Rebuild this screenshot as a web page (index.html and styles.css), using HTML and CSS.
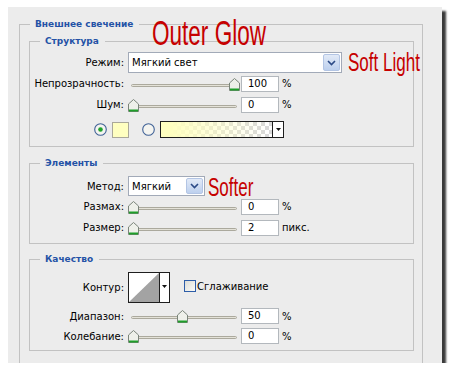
FILE: index.html
```html
<!DOCTYPE html>
<html>
<head>
  <meta charset="utf-8">
  <title>Внешнее свечение</title>
  <link rel="stylesheet" href="styles.css">
</head>
<body>
  <div class="panel">
    <div class="group outer">
      <div class="group-title outer-title">Внешнее свечение</div>

      <!-- Структура -->
      <div class="group inner structure">
        <div class="group-title">Структура</div>
        <div class="row row-select">
          <span class="label">Режим:</span>
          <div class="select select-wide">
            <span class="select-text">Мягкий свет</span>
            <span class="select-btn"><svg width="9" height="6" viewBox="0 0 9 6"><path d="M1 1 L4.5 4.5 L8 1" fill="none" stroke="#2b4a86" stroke-width="1.6"/></svg></span>
          </div>
          <span class="note">Soft Light</span>
        </div>
        <div class="row">
          <span class="label">Непрозрачность:</span>
          <div class="slider">
            <div class="track"></div>
            <svg class="thumb" style="left:101px" width="11" height="13" viewBox="0 0 11 13"><path d="M5.5 .5 L10.5 5 V12.5 H.5 V5 Z" fill="#eef0ea" stroke="#7a847a"/><path d="M1 11.5 H10" stroke="#1f9e2a" stroke-width="2"/></svg>
          </div>
          <div class="num">100</div><span class="unit">%</span>
        </div>
        <div class="row">
          <span class="label">Шум:</span>
          <div class="slider">
            <div class="track"></div>
            <svg class="thumb" style="left:0px" width="11" height="13" viewBox="0 0 11 13"><path d="M5.5 .5 L10.5 5 V12.5 H.5 V5 Z" fill="#eef0ea" stroke="#7a847a"/><path d="M1 11.5 H10" stroke="#1f9e2a" stroke-width="2"/></svg>
          </div>
          <div class="num">0</div><span class="unit">%</span>
        </div>
        <div class="color-row">
          <svg class="radio" width="13" height="13" viewBox="0 0 13 13"><circle cx="6.5" cy="6.5" r="5.8" fill="#f4f4f0" stroke="#3f6196" stroke-width="1.1"/><circle cx="6.5" cy="6.5" r="2.3" fill="#1fa32b"/></svg>
          <span class="swatch"></span>
          <svg class="radio radio-2" width="13" height="13" viewBox="0 0 13 13"><circle cx="6.5" cy="6.5" r="5.8" fill="#f4f4f0" stroke="#3f6196" stroke-width="1.1"/></svg>
          <div class="gradient">
            <span class="gradient-fill"></span>
            <span class="gradient-btn"><svg width="5" height="3" viewBox="0 0 5 3"><path d="M0 0 H5 L2.5 3 Z" fill="#111"/></svg></span>
          </div>
        </div>
      </div>

      <!-- Элементы -->
      <div class="group inner elements">
        <div class="group-title">Элементы</div>
        <div class="row row-select-small">
          <span class="label">Метод:</span>
          <div class="select select-small">
            <span class="select-text">Мягкий</span>
            <span class="select-btn"><svg width="9" height="6" viewBox="0 0 9 6"><path d="M1 1 L4.5 4.5 L8 1" fill="none" stroke="#2b4a86" stroke-width="1.6"/></svg></span>
          </div>
          <span class="note note-short">Softer</span>
        </div>
        <div class="row">
          <span class="label">Размах:</span>
          <div class="slider">
            <div class="track"></div>
            <svg class="thumb" style="left:0px" width="11" height="13" viewBox="0 0 11 13"><path d="M5.5 .5 L10.5 5 V12.5 H.5 V5 Z" fill="#eef0ea" stroke="#7a847a"/><path d="M1 11.5 H10" stroke="#1f9e2a" stroke-width="2"/></svg>
          </div>
          <div class="num">0</div><span class="unit">%</span>
        </div>
        <div class="row">
          <span class="label">Размер:</span>
          <div class="slider">
            <div class="track"></div>
            <svg class="thumb" style="left:0px" width="11" height="13" viewBox="0 0 11 13"><path d="M5.5 .5 L10.5 5 V12.5 H.5 V5 Z" fill="#eef0ea" stroke="#7a847a"/><path d="M1 11.5 H10" stroke="#1f9e2a" stroke-width="2"/></svg>
          </div>
          <div class="num">2</div><span class="unit">пикс.</span>
        </div>
      </div>

      <!-- Качество -->
      <div class="group inner quality">
        <div class="group-title">Качество</div>
        <div class="row row-contour">
          <span class="label">Контур:</span>
          <div class="contour">
            <svg class="contour-preview" width="30" height="29" viewBox="0 0 30 29"><rect width="30" height="29" fill="#fff"/><path d="M0 29 L30 0 V29 Z" fill="#a3a3a3"/></svg>
            <span class="contour-btn"><svg width="5" height="3" viewBox="0 0 5 3"><path d="M0 0 H5 L2.5 3 Z" fill="#111"/></svg></span>
          </div>
          <span class="checkbox"></span>
          <span class="check-label">Сглаживание</span>
        </div>
        <div class="row row-compact">
          <span class="label">Диапазон:</span>
          <div class="slider">
            <div class="track"></div>
            <svg class="thumb" style="left:49px" width="11" height="13" viewBox="0 0 11 13"><path d="M5.5 .5 L10.5 5 V12.5 H.5 V5 Z" fill="#eef0ea" stroke="#7a847a"/><path d="M1 11.5 H10" stroke="#1f9e2a" stroke-width="2"/></svg>
          </div>
          <div class="num">50</div><span class="unit">%</span>
        </div>
        <div class="row row-compact">
          <span class="label">Колебание:</span>
          <div class="slider">
            <div class="track"></div>
            <svg class="thumb" style="left:0px" width="11" height="13" viewBox="0 0 11 13"><path d="M5.5 .5 L10.5 5 V12.5 H.5 V5 Z" fill="#eef0ea" stroke="#7a847a"/><path d="M1 11.5 H10" stroke="#1f9e2a" stroke-width="2"/></svg>
          </div>
          <div class="num">0</div><span class="unit">%</span>
        </div>
      </div>
    </div>

    <div class="annotation">Outer Glow</div>
  </div>
</body>
</html>
```

FILE: styles.css
```css
body {
  margin: 0;
  background-color: #fff;
  font-family: "DejaVu Sans", Verdana, sans-serif;
  font-size: 10px;
  color: #000;
}
.panel {
  position: relative;
  box-sizing: border-box;
  width: 434px;
  height: 356px;
  margin: 7px 0 0 8px;
  padding: 17px 19px 0 11px;
  background-color: #ececec;
  box-shadow: 4px 4px 2px #3a3a3a;
}
.group {
  border: 1px solid #c2c2c2;
  box-sizing: border-box;
}
.outer {
  height: 339px;
  border-bottom: none;
  padding: 0 8px 0 9px;
}
.group-title {
  width: fit-content;
  margin: -8px 0 6px 10px;
  padding: 0 6px 0 5px;
  line-height: 14px;
  background-color: #ececec;
  color: #2452a6;
  font-family: "DejaVu Sans", Verdana, sans-serif;
  font-weight: bold;
  font-size: 9px;
}
.outer-title {
  margin-left: 1px;
  margin-bottom: 10px;
  padding-left: 5px;
}
.structure {
  padding-bottom: 8px;
}
.structure .group-title {
  margin-bottom: 4px;
}
.elements {
  margin-top: 16px;
  padding-bottom: 5px;
}
.quality {
  margin-top: 15px;
  padding-bottom: 4px;
}
.row {
  display: flex;
  align-items: center;
  height: 21px;
}
.row > * {
  flex-shrink: 0;
}
.row-select-small {
  height: 20px;
}
.row-contour {
  height: 31px;
  margin-bottom: 3px;
}
.row-compact {
  height: 20px;
}
.label {
  width: 94px;
  margin-right: 4px;
  text-align: right;
  white-space: nowrap;
}

/* select */
.select {
  display: flex;
  box-sizing: border-box;
  border: 1px solid #a2aab8;
  background-color: #fff;
}
.select-wide {
  width: 214px;
  height: 21px;
}
.select-small {
  width: 77px;
  height: 20px;
}
.select-text {
  flex: 1;
  padding-left: 3px;
  display: flex;
  align-items: center;
}
.select-btn {
  width: 17px;
  margin: 1px;
  box-sizing: border-box;
  border: 1px solid #b3c5e4;
  border-radius: 2px;
  background: linear-gradient(#e2eaf7, #bdd0ee);
  display: flex;
  align-items: center;
  justify-content: center;
}
.note {
  margin-left: 6px;
  font-family: "Liberation Sans", Arial, sans-serif;
  font-size: 21px;
  color: #c60000;
  white-space: nowrap;
  transform: scale(0.81, 1.2);
  transform-origin: left center;
}
.note-short {
  margin-left: 3px;
  padding-top: 2px;
}
.annotation {
  position: absolute;
  left: 144px;
  top: 8px;
  font-family: "Liberation Sans", Arial, sans-serif;
  font-size: 28px;
  line-height: 30px;
  color: #c60000;
  transform: scale(0.805, 1.25);
  transform-origin: left top;
}

/* slider */
.slider {
  position: relative;
  width: 110px;
  height: 100%;
  margin-right: 3px;
}
.track {
  position: absolute;
  left: 3px;
  right: 1px;
  top: 11px;
  height: 1px;
  border: 1px solid #aba99d;
  border-radius: 2px;
  background-color: #e4e2d8;
}
.row-compact .track {
  top: 10px;
}
.thumb {
  position: absolute;
  top: 5px;
}
.row-compact .thumb {
  top: 4px;
}
.num {
  box-sizing: border-box;
  width: 38px;
  height: 16px;
  padding-left: 6px;
  border: 1px solid #b3b8bd;
  background-color: #fff;
  line-height: 14px;
}
.unit {
  margin-left: 3px;
}

/* colour row */
.color-row {
  display: flex;
  align-items: center;
  height: 17px;
  margin-top: 6px;
  padding-left: 64px;
}
.swatch {
  box-sizing: border-box;
  width: 17px;
  height: 16px;
  margin-left: 5px;
  border: 1px solid #aaa89a;
  background-color: #ffffc0;
}
.radio-2 {
  margin-left: 13px;
}
.gradient {
  display: flex;
  box-sizing: border-box;
  width: 124px;
  height: 17px;
  margin-left: 5px;
  border: 1px solid #1e1e1e;
}
.gradient-fill {
  flex: 1;
  background:
    linear-gradient(to right, #ffffc0 8%, rgba(255, 255, 192, 0) 96%),
    repeating-conic-gradient(#d9d9d9 0 25%, #ffffff 0 50%) 0 0 / 8px 8px;
}
.gradient-btn {
  width: 10px;
  border-left: 1px solid #1e1e1e;
  background-color: #fff;
  display: flex;
  align-items: center;
  justify-content: center;
}

/* contour */
.contour {
  display: flex;
  box-sizing: border-box;
  width: 42px;
  height: 31px;
  border: 1px solid #1e1e1e;
  background-color: #fff;
}
.contour-preview {
  display: block;
}
.contour-btn {
  flex: 1;
  border-left: 1px solid #1e1e1e;
  display: flex;
  justify-content: center;
  padding-top: 12px;
  box-sizing: border-box;
}
.checkbox {
  box-sizing: border-box;
  width: 12px;
  height: 12px;
  margin-left: 14px;
  margin-top: -3px;
  border: 1px solid #2d5da8;
  background: linear-gradient(135deg, #dcdcd6, #fbfbf8);
}
.check-label {
  margin-left: 1px;
  margin-top: -3px;
}
```
